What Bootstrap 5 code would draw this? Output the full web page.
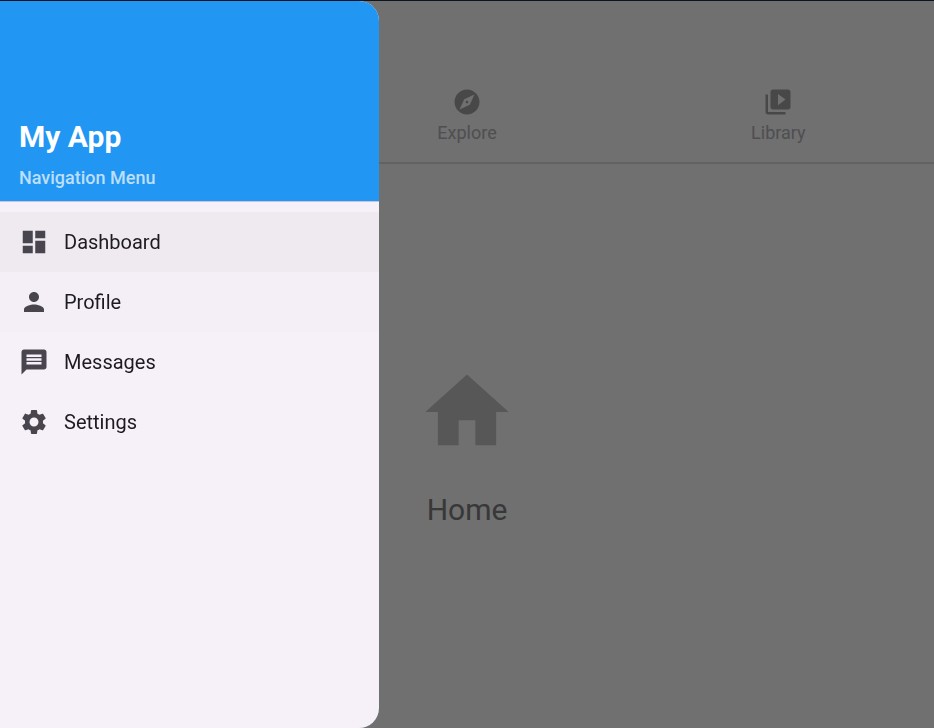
<!DOCTYPE html>
<html lang="en">
<head>
<meta charset="utf-8">
<meta name="viewport" content="width=device-width, initial-scale=1">
<title>My App</title>
<link href="https://cdn.jsdelivr.net/npm/bootstrap@5.3.0/dist/css/bootstrap.min.css" rel="stylesheet">
<style>
  body { font-family: Roboto, "Liberation Sans", sans-serif; background: #fefefe; border-top: 1px solid #0b1420; }
  .app-tabs { background: #fefeff; border-bottom: 2px solid #e0e0e4; padding-top: 69px; }
  .app-tab { height: 92px; color: #b3b3b8; font-size: 18px; line-height: 24px; border: 0; border-radius: 0; padding: 0; gap: 4px; }
  .app-tab:hover { color: #b3b3b8; }
  .app-tab svg { width: 30px; height: 30px; fill: #a4a4a6; }
  .home-view { gap: 28px; color: #7f7f7f; }
  .home-view svg { width: 100px; height: 100px; fill: #c6c6c6; }
  .home-view h1 { font-size: 30px; line-height: 40px; font-weight: 400; }
  .offcanvas-backdrop { top: 1px; }
  .offcanvas-backdrop.show { opacity: .56; }
  .app-drawer.offcanvas { --bs-offcanvas-width: 379px; top: 1px; border: 0; border-radius: 0 20px 20px 0; background: #f6f1f9; color: #1d1b20; overflow: hidden; outline: 0; }
  .drawer-head { height: 201px; background: #2196f3; border-bottom: 1px solid #c5c4d9; padding: 0 19px 10px; gap: 8px; }
  .drawer-head h2 { font-size: 30px; line-height: 40px; font-weight: 700; color: #fff; }
  .drawer-head p { font-size: 18px; line-height: 26px; font-weight: 500; color: #bcdffb; }
  .drawer-list { padding-top: 10px; }
  .drawer-item { height: 60px; padding: 0 19px; gap: 15px; font-size: 20px; line-height: 30px; color: #1d1b20; }
  .drawer-item.current { background: #eeeaf0; }
  .drawer-item.touched { background: #f4eff6; }
  .drawer-item svg { width: 30px; height: 30px; fill: #49454f; }
</style>
<script src="https://cdn.jsdelivr.net/npm/bootstrap@5.3.0/dist/js/bootstrap.bundle.min.js"></script>
</head>
<body class="d-flex flex-column min-vh-100">
  <header class="app-tabs">
    <nav class="row g-0" aria-label="Sections">
      <div class="col-4 offset-4">
        <button type="button" class="btn app-tab w-100 d-flex flex-column align-items-center justify-content-center">
          <svg viewBox="0 0 24 24" aria-hidden="true"><path d="M12 10.9c-.61 0-1.1.49-1.1 1.1s.49 1.1 1.1 1.1c.61 0 1.1-.49 1.1-1.1s-.49-1.1-1.1-1.1zM12 2C6.48 2 2 6.48 2 12s4.48 10 10 10 10-4.48 10-10S17.52 2 12 2zm2.19 12.19L6 18l3.81-8.19L18 6l-3.81 8.19z"/></svg>
          Explore
        </button>
      </div>
      <div class="col-4">
        <button type="button" class="btn app-tab w-100 d-flex flex-column align-items-center justify-content-center">
          <svg viewBox="0 0 24 24" aria-hidden="true"><path d="M4 6H2v14c0 1.1.9 2 2 2h14v-2H4V6zm16-4H8c-1.1 0-2 .9-2 2v12c0 1.1.9 2 2 2h12c1.1 0 2-.9 2-2V4c0-1.1-.9-2-2-2zm-8 12.5v-9l6 4.5-6 4.5z"/></svg>
          Library
        </button>
      </div>
    </nav>
  </header>

  <main class="home-view flex-grow-1 d-flex flex-column align-items-center justify-content-center">
    <svg viewBox="0 0 24 24" aria-hidden="true"><path d="M10 20v-6h4v6h5v-8h3L12 3 2 12h3v8z"/></svg>
    <h1 class="m-0">Home</h1>
  </main>

  <aside class="offcanvas offcanvas-start show app-drawer" tabindex="-1" aria-labelledby="drawerTitle">
    <div class="drawer-head d-flex flex-column justify-content-end flex-shrink-0">
      <h2 id="drawerTitle" class="m-0">My App</h2>
      <p class="m-0">Navigation Menu</p>
    </div>
    <nav class="drawer-list d-flex flex-column" aria-label="Navigation Menu">
      <a href="#dashboard" class="drawer-item current d-flex align-items-center text-decoration-none">
        <svg viewBox="0 0 24 24" aria-hidden="true"><path d="M3 13h8V3H3v10zm0 8h8v-6H3v6zm10 0h8V11h-8v10zm0-18v6h8V3h-8z"/></svg>
        Dashboard
      </a>
      <a href="#profile" class="drawer-item touched d-flex align-items-center text-decoration-none">
        <svg viewBox="0 0 24 24" aria-hidden="true"><path d="M12 12c2.21 0 4-1.79 4-4s-1.79-4-4-4-4 1.79-4 4 1.79 4 4 4zm0 2c-2.67 0-8 1.34-8 4v2h16v-2c0-2.66-5.33-4-8-4z"/></svg>
        Profile
      </a>
      <a href="#messages" class="drawer-item d-flex align-items-center text-decoration-none">
        <svg viewBox="0 0 24 24" aria-hidden="true"><path d="M20 2H4c-1.1 0-1.99.9-1.99 2L2 22l4-4h14c1.1 0 2-.9 2-2V4c0-1.1-.9-2-2-2zm-2 12H6v-2h12v2zm0-3H6V9h12v2zm0-3H6V6h12v2z"/></svg>
        Messages
      </a>
      <a href="#settings" class="drawer-item d-flex align-items-center text-decoration-none">
        <svg viewBox="0 0 24 24" aria-hidden="true"><path d="M19.14 12.94c.04-.3.06-.61.06-.94 0-.32-.02-.64-.07-.94l2.03-1.58c.18-.14.23-.41.12-.61l-1.92-3.32c-.12-.22-.37-.29-.59-.22l-2.39.96c-.5-.38-1.03-.7-1.62-.94l-.36-2.54c-.04-.24-.24-.41-.48-.41h-3.84c-.24 0-.43.17-.47.41l-.36 2.54c-.59.24-1.13.57-1.62.94l-2.39-.96c-.22-.08-.47 0-.59.22L2.74 8.87c-.12.21-.08.47.12.61l2.03 1.58c-.05.3-.09.63-.09.94s.02.64.07.94l-2.03 1.58c-.18.14-.23.41-.12.61l1.92 3.32c.12.22.37.29.59.22l2.39-.96c.5.38 1.03.7 1.62.94l.36 2.54c.05.24.24.41.48.41h3.84c.24 0 .44-.17.47-.41l.36-2.54c.59-.24 1.13-.56 1.62-.94l2.39.96c.22.08.47 0 .59-.22l1.92-3.32c.12-.22.07-.47-.12-.61l-2.01-1.58zM12 15.6c-1.98 0-3.6-1.62-3.6-3.6s1.62-3.6 3.6-3.6 3.6 1.62 3.6 3.6-1.62 3.6-3.6 3.6z"/></svg>
        Settings
      </a>
    </nav>
  </aside>
</body>
</html>
